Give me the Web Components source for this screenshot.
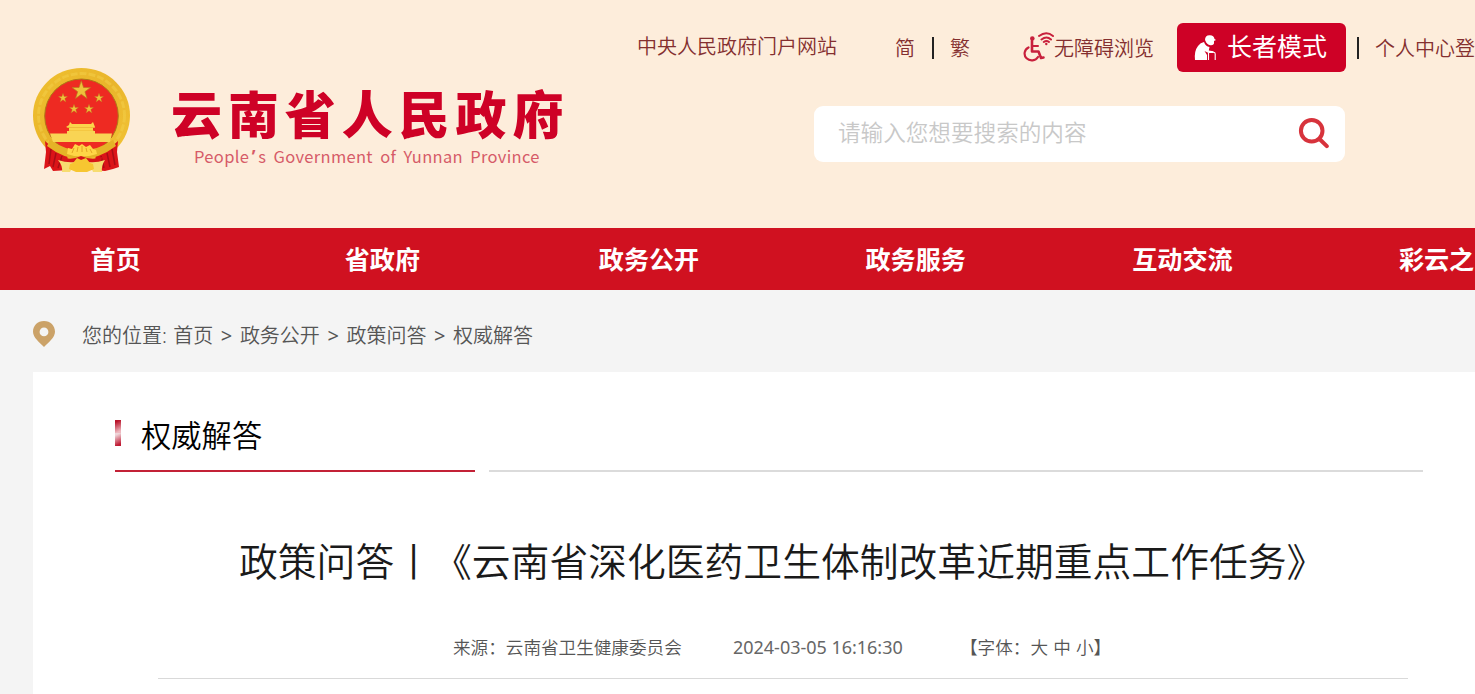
<!DOCTYPE html>
<html lang="zh-CN">
<head>
<meta charset="utf-8">
<title>云南省人民政府</title>
<style>
	html, body {
		margin: 0;
		height: 694px;
		overflow: hidden;
		background: #f4f4f4;
		font-family: "Noto Sans", "Noto Sans CJK SC", sans-serif;
	}
</style>
</head>
<body>
<gov-page>
	<gov-header slot="header">
		<gov-brand slot="brand" name="云南省人民政府">People<i>’</i>s Government of Yunnan Province</gov-brand>
		<gov-toplinks slot="links"></gov-toplinks>
		<gov-search slot="search" hint="请输入您想要搜索的内容"></gov-search>
	</gov-header>
	<gov-nav slot="nav">
		<span>首页</span>
		<span>省政府</span>
		<span>政务公开</span>
		<span>政务服务</span>
		<span>互动交流</span>
		<span>彩云之南</span>
	</gov-nav>
	<gov-breadcrumb slot="crumb">您的位置: 首页<i>&gt;</i>政务公开<i>&gt;</i>政策问答<i>&gt;</i>权威解答</gov-breadcrumb>
	<gov-article>
		<span slot="column">权威解答</span>
		<span slot="title">政策问答丨《云南省深化医药卫生体制改革近期重点工作任务》</span>
		<span slot="source">来源：云南省卫生健康委员会</span>
		<span slot="date">2024-03-05 16:16:30</span>
		<span slot="size">【字体：大 中 小】</span>
	</gov-article>
</gov-page>

<script>
(function() {
	class GovElement extends HTMLElement {
		constructor() {
			super();
			let template = document.createElement("template");
			template.innerHTML = this.constructor.html;
			this._shadowRoot = this.attachShadow({mode: "open"});
			this._shadowRoot.appendChild(template.content.cloneNode(true));
		}
	}

	class GovPage extends GovElement {
		static html = `
			<style>
				:host {
					display: flex;
					flex-direction: column;
					width: 1475px;
					height: 694px;
					overflow: hidden;
				}
			</style>
			<slot name="header"></slot>
			<slot name="nav"></slot>
			<slot name="crumb"></slot>
			<slot></slot>
		`;
	}

	class GovHeader extends GovElement {
		static html = `
			<style>
				:host {
					display: flex;
					justify-content: space-between;
					flex: none;
					height: 228px;
					background: #fdeddb;
				}
				.right {
					display: flex;
					flex-direction: column;
					width: 838px;
				}
			</style>
			<slot name="brand"></slot>
			<div class="right">
				<slot name="links"></slot>
				<slot name="search"></slot>
			</div>
		`;
	}

	class GovEmblem extends GovElement {
		static html = `
			<style>
				:host { display: block; width: 97px; height: 105px; }
				svg { display: block; }
			</style>
			<svg width="97" height="105" viewBox="0 0 97 105">
				<defs>
					<linearGradient id="gold" x1="0" y1="0" x2="1" y2="1">
						<stop offset="0" stop-color="#efc02f"/>
						<stop offset=".5" stop-color="#e9b52b"/>
						<stop offset="1" stop-color="#f3c536"/>
					</linearGradient>
					<polygon id="star" points="0,-10 2.3,-3.1 9.5,-3.1 3.7,1.2 5.9,8.1 0,3.9 -5.9,8.1 -3.7,1.2 -9.5,-3.1 -2.3,-3.1"/>
				</defs>
				<ellipse cx="48.5" cy="47.5" rx="48.5" ry="47.5" fill="url(#gold)"/>
				<ellipse cx="48.5" cy="47.5" rx="43" ry="42" fill="none" stroke="#f4cf4a" stroke-width="3" stroke-dasharray="7 2" opacity=".5"/>
				<ellipse cx="48.5" cy="48" rx="36.8" ry="37" fill="#ee2a22" stroke="#ad7916" stroke-width="1"/>
				<g fill="#eec23b" stroke="#b97a1d" stroke-width=".7">
					<use href="#star" transform="translate(48.3 22.5) scale(.98)"/>
					<use href="#star" transform="translate(30 30) scale(.48)"/>
					<use href="#star" transform="translate(66 30) scale(.48)"/>
					<use href="#star" transform="translate(41 41) scale(.48)"/>
					<use href="#star" transform="translate(56 41) scale(.48)"/>
				</g>
				<path d="M37 54 L39 56 H58 L60 54 L62 59 L60 60 V64 H36 V60 L33 59 L36 57Z" fill="#fbd44b"/>
				<path d="M34 59.5 H62 M36 63 H61" stroke="#edb236" stroke-width=".8"/>
				<path d="M17 65.5 H34 V63 H62 V65.5 H79 L77 74 H20Z" fill="#f9d454"/>
				<path d="M12 73 Q22 83 34 86 L36 102 L20 103 L17 98 L11 101 L13 84Z" fill="#db1418"/>
				<path d="M85 73 Q75 83 63 86 L61 102 L72 103 L80 101 L86 99 L84 84Z" fill="#db1418"/>
				<path d="M18 81 L16 96 M23 85 L20 99 M29 88 L25 100 M79 81 L82 97 M74 85 L77 99 M68 88 L71 100" stroke="#a90d15" stroke-width="1.5" fill="none"/>
				<path d="M17 72 Q31 82 48 82 Q66 82 80 72 L83 78 Q66 91 48 91 Q31 91 14 78Z" fill="#e5b327"/>
				<path d="M34 86 L35 80 L39 81 L42 76 L46 78 L49 76 L53 79 L57 77 L60 81 L63 82 L64 86 Q48 91 34 86Z" fill="#ffd646"/>
				<path d="M39 85 L41 80 M44 84 L45 79 M49 84 V78 M54 84 L53 80 M59 85 L57 81" stroke="#db951b" stroke-width=".8"/>
				<path d="M29 89 Q38 93 48 88 Q59 93 69 89 L66 102 H31Z" fill="#d71619"/>
				<path d="M25 92 Q34 95 42 94 L37 104 H29 Q30 98 25 92Z M72 92 Q63 95 56 94 L60 104 H69 Q68 98 72 92Z" fill="#f7dc70"/>
				<path d="M36 101 L37 96 L40 95 L44 90 L48 92 L53 90 L57 95 L60 96 L61 101 L54 104 H43Z" fill="#f7c631"/>
			</svg>
		`;
	}

	class GovBrand extends GovElement {
		static html = `
			<style>
				:host {
					display: flex;
					align-items: flex-start;
					padding: 68px 0 0 33px;
					white-space: nowrap;
				}
				.names { margin: 21px 0 0 41px; width: 420px; }
				.zh {
					height: 56px;
					font: 900 51px/47px "Noto Sans CJK SC", sans-serif;
					letter-spacing: 5.9px;
					color: #ce0126;
				}
				.en {
					padding-left: 23px;
					font: 16.5px/22px "Noto Sans CJK SC", sans-serif;
					letter-spacing: .33px;
					word-spacing: 3.2px;
					color: #d65b68;
				}
				::slotted(i) {
					display: inline-block;
					width: 9px;
					font: bold 17px/18px "Noto Sans", sans-serif;
					text-align: center;
				}
			</style>
			<gov-emblem></gov-emblem>
			<div class="names">
				<div class="zh"></div>
				<div class="en"><slot></slot></div>
			</div>
		`;
		connectedCallback() {
			this._shadowRoot.querySelector(".zh").textContent = this.getAttribute("name");
		}
	}

	class GovToplinks extends GovElement {
		static html = `
			<style>
				:host {
					display: flex;
					align-items: flex-start;
					flex: none;
					height: 106px;
					font-size: 20px;
					font-weight: 350;
					line-height: 30px;
					color: #842f2f;
					white-space: nowrap;
				}
				span { flex: none; margin-top: 34px; }
				.portal { width: 258px; margin-top: 32px; }
				.bar { flex: none; width: 2px; height: 22px; margin-top: 37px; background: #222; }
				.wheel { flex: none; margin: 30px 0 0 53px; }
				.elder {
					display: flex;
					flex: none;
					box-sizing: border-box;
					width: 169px;
					height: 49px;
					margin: 23px 11px 0 23px;
					padding: 0 0 0 17px;
					border-radius: 6px;
					background: #ce0126;
					color: #fff;
					font-size: 25px;
					font-weight: 400;
					line-height: 47px;
				}
				.elder svg { margin: 12px 10px 0 0; flex: none; }
			</style>
			<span class="portal">中央人民政府门户网站</span>
			<span>简</span>
			<div class="bar" style="margin-left:17px;margin-right:16px"></div>
			<span>繁</span>
			<svg class="wheel" width="31" height="32" viewBox="0 0 31 32" fill="none" stroke="#c8203c" stroke-linecap="round">
				<circle cx="9.3" cy="8.5" r="2.3" fill="#c8203c" stroke="none"/>
				<path d="M9 11 V21.5 H15.5 L18 28 L20.5 27.5" stroke-width="2.6" stroke-linejoin="round"/>
				<path d="M9 16 H15" stroke-width="2"/>
				<path d="M5.5 17.5 A7.2 6.8 0 1 0 15 27" stroke-width="2.2"/>
				<path d="M16 6 Q23.5 .5 30 6 M18.5 9.5 Q23.5 5.5 28 9.5 M20.8 12 Q23.5 10 26 12" stroke-width="2"/>
				<circle cx="23.3" cy="14" r="1.2" fill="#c8203c" stroke="none"/>
			</svg>
			<span>无障碍浏览</span>
			<div class="elder">
				<svg width="23" height="27" viewBox="0 0 23 27" fill="#fff">
					<path d="M11 5 Q11 0 16 .3 Q20 .6 20.5 4 L22 5 L20 6 L20 8.5 Q19.5 10.5 16.5 10.2 Q12.5 9.5 11.5 6Z"/>
					<path d="M10 7 Q11.5 11.5 15.5 12 L14.8 15.5 L19.5 16.3 L19.5 18 L14.5 18 L10.5 16 L13 20 L13 25 H1 Q0 16 4 11 Q6.5 7.5 10 7Z"/>
					<path d="M14.5 18 V25 M15 17.3 H19.5 Q21.2 17.3 21.2 19 V25" fill="none" stroke="#fff" stroke-width="1.1"/>
				</svg>长者模式
			</div>
			<div class="bar" style="margin-right:16px"></div>
			<span>个人中心登录</span>
		`;
	}

	class GovSearch extends GovElement {
		static html = `
			<style>
				:host {
					display: flex;
					justify-content: space-between;
					box-sizing: border-box;
					width: 531px;
					height: 56px;
					margin-left: 177px;
					padding: 0 15px 0 24px;
					border-radius: 9px;
					background: #fff;
					color: #c8c8c8;
					font-size: 22.6px;
					font-weight: 350;
					line-height: 54px;
				}
				svg { margin-top: 11px; }
			</style>
			<span></span>
			<svg width="32" height="32" viewBox="0 0 32 32" fill="none" stroke="#d7333c">
				<circle cx="13.7" cy="13.8" r="10.8" stroke-width="4"/>
				<path d="M21.5 22 L28.8 29.2" stroke-width="4" stroke-linecap="round"/>
			</svg>
		`;
		connectedCallback() {
			this._shadowRoot.querySelector("span").textContent = this.getAttribute("hint");
		}
	}

	class GovNav extends GovElement {
		static html = `
			<style>
				:host {
					display: flex;
					flex: none;
					height: 62px;
					background: #d01120;
				}
				div {
					display: flex;
					margin-left: -17.7px;
				}
				::slotted(span) {
					flex: none;
					width: 266.7px;
					text-align: center;
					color: #fff;
					font: bold 25.1px/61px "Noto Sans CJK SC", sans-serif;
				}
			</style>
			<div><slot></slot></div>
		`;
	}

	class GovBreadcrumb extends GovElement {
		static html = `
			<style>
				:host {
					display: flex;
					flex: none;
					height: 82px;
					padding-left: 33px;
					font-size: 20px;
					font-weight: 350;
					line-height: 91px;
					color: #555;
					word-spacing: 1.2px;
				}
				svg { margin: 31px 27px 0 0; }
				::slotted(i) {
					display: inline-block;
					width: 26.6px;
					text-align: center;
					font-style: normal;
					font-weight: 400;
				}
			</style>
			<svg width="22" height="26" viewBox="0 0 22 26">
				<path fill="#cba268" fill-rule="evenodd" d="M11 0 C17.5 0 22 4.7 22 10.8 C22 16.5 15.5 21.5 11 26 C6.5 21.5 0 16.5 0 10.8 C0 4.7 4.5 0 11 0Z M11 6.5 A4.4 4.4 0 1 0 11 15.3 A4.4 4.4 0 1 0 11 6.5Z"/>
			</svg>
			<span><slot></slot></span>
		`;
	}

	class GovArticle extends GovElement {
		static html = `
			<style>
				:host {
					display: block;
					flex: 1;
					margin-left: 33px;
					padding: 0 52px 0 82px;
					background: #fff;
					white-space: nowrap;
				}
				.head { display: flex; gap: 14px; height: 100px; }
				.tab {
					display: flex;
					box-sizing: border-box;
					width: 360px;
					border-bottom: 2px solid #c32136;
					color: #000;
					font-size: 30.3px;
					font-weight: 350;
					line-height: 127px;
				}
				.mark {
					width: 6px;
					height: 26px;
					margin: 48px 20px 0 0;
					background:
						linear-gradient(155deg, #b9152b 15%, #eeb9c0 85%) top / 6px 13px no-repeat,
						linear-gradient(155deg, #efd5d9 15%, #c01c35 85%) bottom / 6px 13px no-repeat;
				}
				.rest { flex: 1; border-bottom: 2px solid #dbdbdb; }
				.title {
					height: 148px;
					padding-left: 124px;
					font-size: 38.8px;
					font-weight: 350;
					line-height: 179px;
					color: #1a1a1a;
				}
				.meta {
					display: flex;
					box-sizing: border-box;
					height: 59px;
					width: 1250px;
					margin-left: 43px;
					padding-left: 295px;
					border-bottom: 1px solid #d9d9d9;
					font-size: 17.6px;
					font-weight: 350;
					line-height: 54px;
					color: #555;
				}
				.source { width: 280px; }
				.date { width: 227px; font-weight: 400; font-size: 18px; letter-spacing: -.02px; color: #666; }
				.size { word-spacing: .6px; }
			</style>
			<div class="head">
				<div class="tab"><div class="mark"></div><slot name="column"></slot></div>
				<div class="rest"></div>
			</div>
			<div class="title"><slot name="title"></slot></div>
			<div class="meta">
				<div class="source"><slot name="source"></slot></div>
				<div class="date"><slot name="date"></slot></div>
				<div class="size"><slot name="size"></slot></div>
			</div>
		`;
	}

	customElements.define("gov-page", GovPage);
	customElements.define("gov-header", GovHeader);
	customElements.define("gov-emblem", GovEmblem);
	customElements.define("gov-brand", GovBrand);
	customElements.define("gov-toplinks", GovToplinks);
	customElements.define("gov-search", GovSearch);
	customElements.define("gov-nav", GovNav);
	customElements.define("gov-breadcrumb", GovBreadcrumb);
	customElements.define("gov-article", GovArticle);
})();
</script>
</body>
</html>
